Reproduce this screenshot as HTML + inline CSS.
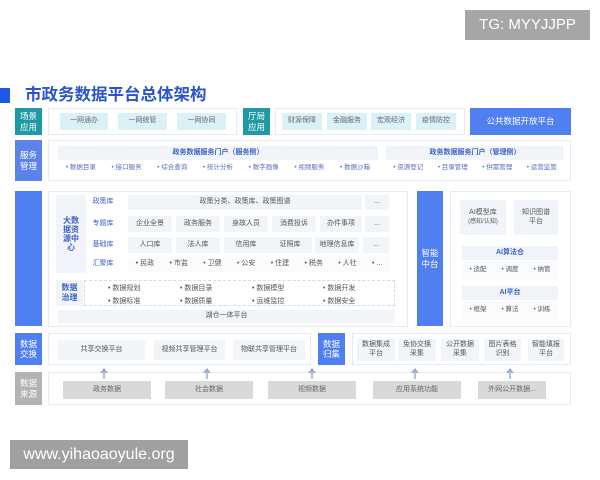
<!DOCTYPE html>
<html><head><meta charset="utf-8"><style>
*{margin:0;padding:0;box-sizing:border-box}
body{width:600px;height:480px;background:#fff;position:relative;overflow:hidden;font-family:"Liberation Sans","Noto Sans CJK SC",sans-serif;color:#555}
.a{position:absolute}
.c{position:absolute;display:flex;align-items:center;justify-content:center;text-align:center;line-height:1.25}
.lbl{color:#fff;font-size:8.5px;line-height:1.2}
.teal{background:#1e9aa4}
.blue{background:#4f7ff0}
.pan{position:absolute;background:#fff;border:1px solid #e6ebf3}
.chip{background:#daf1f7;font-size:7px;color:#667}
.g{background:#f1f4f9;font-size:7px;color:#555}
.t{color:#3b5fc8;font-size:7px}
.b{font-size:6.5px;color:#5570b8}
.gray{background:#d9d9d9;font-size:7px;color:#666}
.arr{position:absolute;width:0;height:0;border-left:4px solid transparent;border-right:4px solid transparent;border-bottom:5px solid #9aaad0}
.st{position:absolute;width:2px;background:#b4c0de}
</style></head><body>
<div class="c" style="left:465px;top:10px;width:125px;height:30px;background:#a6a6a6;color:#fff;font-size:15px">TG: MYYJJPP</div>
<div class="a" style="left:0;top:88px;width:10px;height:15px;background:#1f57e8"></div>
<div class="a" style="left:25px;top:86px;font-size:16.5px;line-height:18px;font-weight:bold;color:#2c56c7">市政务数据平台总体架构</div>

<!-- row1 -->
<div class="c lbl teal" style="left:15px;top:108px;width:27px;height:27px">场景<br>应用</div>
<div class="pan" style="left:48px;top:108px;width:189px;height:27px"></div>
<div class="c chip" style="left:60px;top:113px;width:48px;height:17px">一网通办</div>
<div class="c chip" style="left:118px;top:113px;width:49px;height:17px">一网统管</div>
<div class="c chip" style="left:177px;top:113px;width:49px;height:17px">一网协同</div>
<div class="c lbl teal" style="left:243px;top:108px;width:27px;height:27px">厅局<br>应用</div>
<div class="pan" style="left:275px;top:108px;width:190px;height:27px"></div>
<div class="c chip" style="left:282px;top:113px;width:40px;height:17px">财源保障</div>
<div class="c chip" style="left:327px;top:113px;width:40px;height:17px">金融服务</div>
<div class="c chip" style="left:371px;top:113px;width:40px;height:17px">宏观经济</div>
<div class="c chip" style="left:416px;top:113px;width:40px;height:17px">疫情防控</div>
<div class="c blue" style="left:470px;top:108px;width:101px;height:27px;color:#fff;font-size:8.5px">公共数据开放平台</div>

<!-- row2 -->
<div class="c lbl" style="left:15px;top:140px;width:27px;height:41px;background:#5b84e8">服务<br>管理</div>
<div class="pan" style="left:48px;top:140px;width:523px;height:41px"></div>
<div class="c g" style="left:58px;top:146px;width:320px;height:14px;color:#3b5fc8;font-weight:bold">政务数据服务门户（服务侧）</div>
<div class="c b" style="left:58px;top:162px;width:320px;height:13px;justify-content:space-around">
<span>• 数据目录</span><span>• 接口服务</span><span>• 综合查询</span><span>• 统计分析</span><span>• 数字画像</span><span>• 视频服务</span><span>• 数据沙箱</span></div>
<div class="c g" style="left:386px;top:146px;width:178px;height:14px;color:#3b5fc8;font-weight:bold">政务数据服务门户（管理侧）</div>
<div class="c b" style="left:386px;top:162px;width:178px;height:13px;justify-content:space-around">
<span>• 资源登记</span><span>• 目录管理</span><span>• 供需管理</span><span>• 运营监管</span></div>

<!-- row3 -->
<div class="a blue" style="left:15px;top:191px;width:27px;height:135px"></div>
<div class="pan" style="left:48px;top:191px;width:360px;height:136px"></div>
<div class="c g" style="left:56px;top:195px;width:30px;height:78px;color:#3b5fc8;font-weight:bold;font-size:8px;line-height:1.15">大数<br>据资<br>源中<br>心</div>
<div class="c t" style="left:88px;top:195px;width:30px;height:15px">政策库</div>
<div class="c g" style="left:128px;top:195px;width:234px;height:15px">政策分类、政策库、政策图谱</div>
<div class="c g" style="left:365px;top:195px;width:24px;height:15px">...</div>
<div class="c t" style="left:88px;top:216px;width:30px;height:16px">专题库</div>
<div class="c g" style="left:128px;top:216px;width:44px;height:16px">企业全景</div>
<div class="c g" style="left:176px;top:216px;width:44px;height:16px">政务服务</div>
<div class="c g" style="left:224px;top:216px;width:44px;height:16px">身故人员</div>
<div class="c g" style="left:272px;top:216px;width:44px;height:16px">消费投诉</div>
<div class="c g" style="left:320px;top:216px;width:42px;height:16px">办件事项</div>
<div class="c g" style="left:365px;top:216px;width:24px;height:16px">...</div>
<div class="c t" style="left:88px;top:237px;width:30px;height:16px">基础库</div>
<div class="c g" style="left:128px;top:237px;width:44px;height:16px">人口库</div>
<div class="c g" style="left:176px;top:237px;width:44px;height:16px">法人库</div>
<div class="c g" style="left:224px;top:237px;width:44px;height:16px">信用库</div>
<div class="c g" style="left:268px;top:237px;width:44px;height:16px">证照库</div>
<div class="c g" style="left:315px;top:237px;width:44px;height:16px">地理信息库</div>
<div class="c g" style="left:363px;top:237px;width:26px;height:16px">...</div>
<div class="c t" style="left:88px;top:257px;width:30px;height:15px">汇聚库</div>
<div class="c" style="left:128px;top:257px;width:262px;height:15px;font-size:7px;color:#555;justify-content:space-around;background:#fafbfd">
<span>• 民政</span><span>• 市监</span><span>• 卫健</span><span>• 公安</span><span>• 住建</span><span>• 税务</span><span>• 人社</span><span>• ...</span></div>
<div class="c g" style="left:56px;top:280px;width:27px;height:26px;color:#3b5fc8;font-weight:bold;font-size:8px">数据<br>治理</div>
<div class="a" style="left:84px;top:280px;width:311px;height:26px;border:1px dashed #d4dae6"></div>
<div class="a b" style="left:108px;top:282px;font-size:7px;color:#555;line-height:13px">• 数据规划<br>• 数据标准</div>
<div class="a b" style="left:180px;top:282px;font-size:7px;color:#555;line-height:13px">• 数据目录<br>• 数据质量</div>
<div class="a b" style="left:252px;top:282px;font-size:7px;color:#555;line-height:13px">• 数据模型<br>• 运维监控</div>
<div class="a b" style="left:323px;top:282px;font-size:7px;color:#555;line-height:13px">• 数据开发<br>• 数据安全</div>
<div class="c g" style="left:58px;top:310px;width:337px;height:13px">湖仓一体平台</div>

<div class="c lbl blue" style="left:417px;top:191px;width:26px;height:135px">智能<br>中台</div>
<div class="pan" style="left:450px;top:191px;width:121px;height:136px"></div>
<div class="c g" style="left:460px;top:200px;width:46px;height:35px;font-size:7px"><div>AI模型库<br><span style="font-size:6px">(感知/认知)</span></div></div>
<div class="c g" style="left:514px;top:200px;width:44px;height:35px">知识图谱<br>平台</div>
<div class="c g" style="left:462px;top:246px;width:96px;height:14px;color:#3b5fc8;font-weight:bold">AI算法仓</div>
<div class="c" style="left:462px;top:262px;width:96px;height:17px;font-size:6.5px;color:#555;justify-content:space-around;background:#fafbfd"><span>• 适配</span><span>• 调度</span><span>• 纳管</span></div>
<div class="c g" style="left:462px;top:286px;width:96px;height:14px;color:#3b5fc8;font-weight:bold">AI平台</div>
<div class="c" style="left:462px;top:302px;width:96px;height:17px;font-size:6.5px;color:#555;justify-content:space-around;background:#fafbfd"><span>• 框架</span><span>• 算法</span><span>• 训练</span></div>

<!-- row4 -->
<div class="c lbl blue" style="left:15px;top:333px;width:27px;height:32px">数据<br>交换</div>
<div class="pan" style="left:48px;top:333px;width:263px;height:32px"></div>
<div class="c g" style="left:58px;top:340px;width:87px;height:20px">共享交换平台</div>
<div class="c g" style="left:154px;top:340px;width:71px;height:20px">视频共享管理平台</div>
<div class="c g" style="left:233px;top:340px;width:72px;height:20px">物联共享管理平台</div>
<div class="c lbl blue" style="left:318px;top:333px;width:27px;height:32px">数据<br>归集</div>
<div class="pan" style="left:352px;top:333px;width:219px;height:32px"></div>
<div class="c g" style="left:357px;top:339px;width:38px;height:22px">数据集成<br>平台</div>
<div class="c g" style="left:398px;top:339px;width:38px;height:22px">免协交换<br>采集</div>
<div class="c g" style="left:441px;top:339px;width:38px;height:22px">公开数据<br>采集</div>
<div class="c g" style="left:484px;top:339px;width:37px;height:22px">图片表格<br>识别</div>
<div class="c g" style="left:528px;top:339px;width:36px;height:22px">智能填报<br>平台</div>

<!-- row5 -->
<div class="c lbl" style="left:15px;top:372px;width:27px;height:33px;background:#b3b3b3">数据<br>来源</div>
<div class="pan" style="left:48px;top:372px;width:523px;height:33px"></div>
<div class="c gray" style="left:63px;top:381px;width:88px;height:18px">政务数据</div>
<div class="c gray" style="left:165px;top:381px;width:88px;height:18px">社会数据</div>
<div class="c gray" style="left:268px;top:381px;width:88px;height:18px">视频数据</div>
<div class="c gray" style="left:373px;top:381px;width:88px;height:18px">应用系统功能</div>
<div class="c gray" style="left:478px;top:381px;width:68px;height:18px">外网公开数据...</div>
<div class="arr" style="left:100px;top:368px"></div><div class="st" style="left:103px;top:372px;height:7px"></div>
<div class="arr" style="left:203px;top:368px"></div><div class="st" style="left:206px;top:372px;height:7px"></div>
<div class="arr" style="left:308px;top:368px"></div><div class="st" style="left:311px;top:372px;height:7px"></div>
<div class="arr" style="left:411px;top:368px"></div><div class="st" style="left:414px;top:372px;height:7px"></div>
<div class="arr" style="left:506px;top:368px"></div><div class="st" style="left:509px;top:372px;height:7px"></div>

<div class="c" style="left:10px;top:440px;width:178px;height:29px;background:#a0a0a0;color:#fff;font-size:16px">www.yihaoaoyule.org</div>
</body></html>
